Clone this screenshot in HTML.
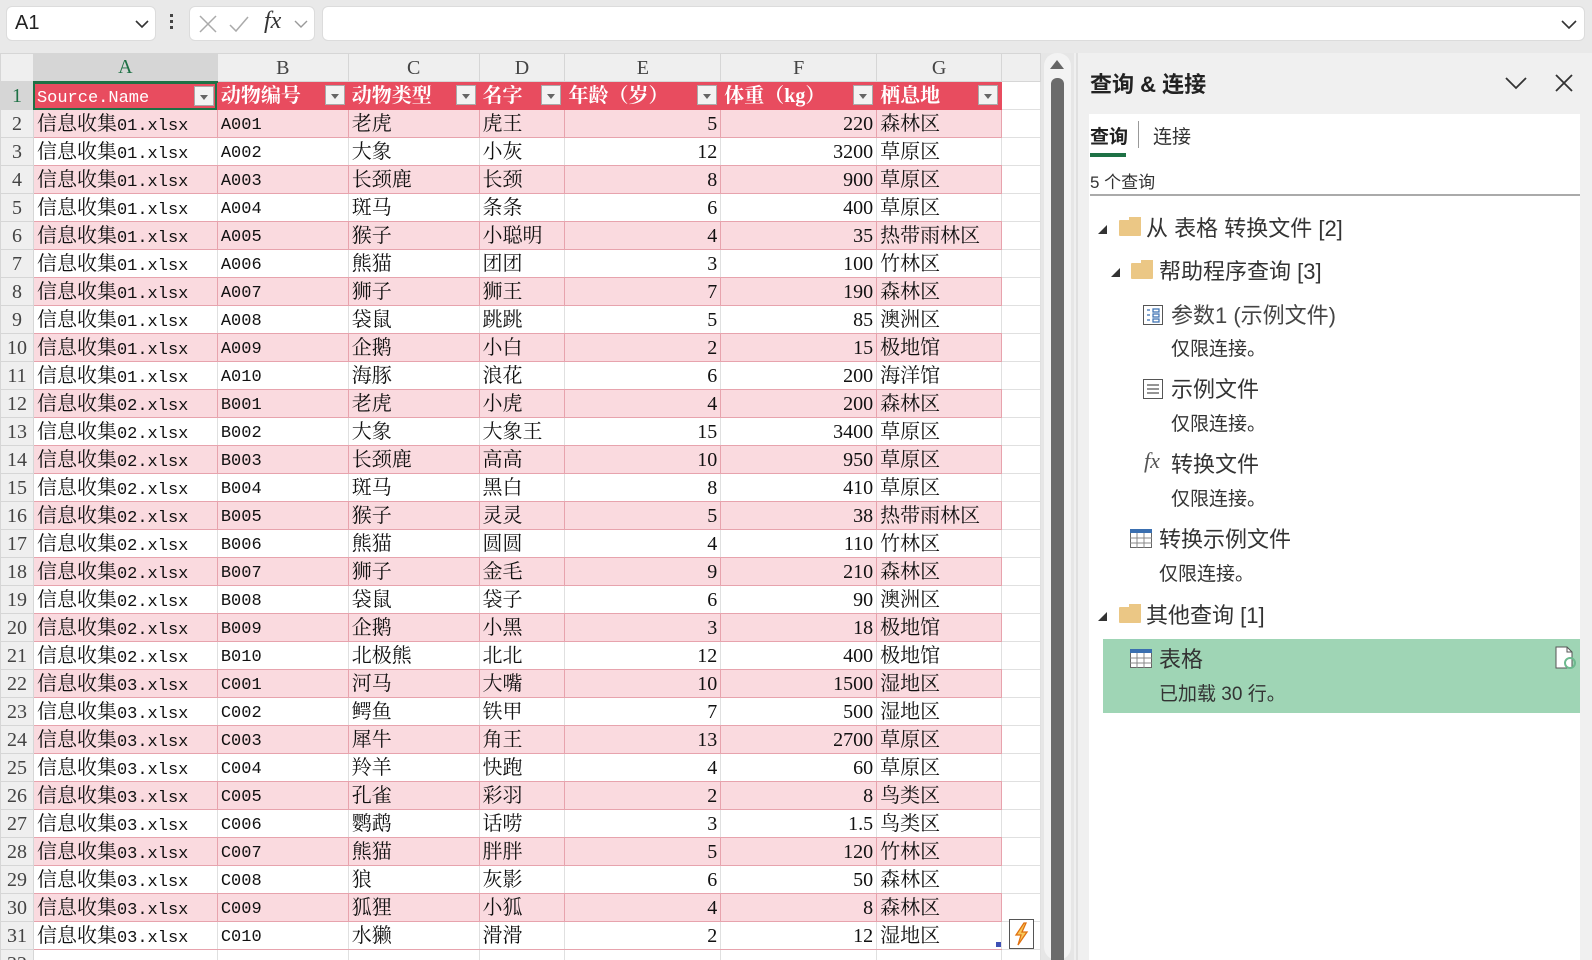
<!DOCTYPE html>
<html><head><meta charset="utf-8"><style>
*{box-sizing:border-box;margin:0;padding:0}
body{width:1592px;height:960px;overflow:hidden;background:#e9e9e9;font-family:"Liberation Sans","Noto Sans CJK SC",sans-serif;position:relative}
.abs{position:absolute}
.box{position:absolute;background:#fff;border:1px solid #dcdcdc;border-radius:6px}
#grid{position:absolute;left:0;top:53px;width:1041px;height:907px;background:#fff;overflow:hidden}
table{border-collapse:collapse;table-layout:fixed;font-family:"Liberation Serif","Noto Serif CJK SC",serif;font-size:20px;color:#111}
tr{height:28px}
td{height:28px;border:1px solid #e0e0e0;padding:0 3px;white-space:nowrap;overflow:hidden;line-height:26px;vertical-align:middle}
span.m{font-family:"Liberation Mono",monospace;font-size:17px;line-height:0}
td.m{font-family:"Liberation Mono",monospace;font-size:17px;line-height:20px;padding-top:5px}
td.h{background:#efefef;color:#444;text-align:center;border-color:#d6d6d6}
td.rn{background:#efefef;color:#444;text-align:center;border-color:#d6d6d6;padding:0}
tr.hd td.c{background:#e84c5f;color:#fff;position:relative;border-color:#e84c5f;font-weight:bold}
tr.p td.c{background:#fadadf;border-color:#e7a3ad}
tr.w td.c{background:#fff;border-bottom-color:#e7a3ad;border-top-color:#e7a3ad;border-left-color:#e0e0e0}
td.n{text-align:right}
.dd{position:absolute;right:3px;top:3px;width:20px;height:20px;background:#f3f3f3;border:1px solid #aaa}
.dd:after{content:"";position:absolute;left:5px;top:8px;border-left:4px solid transparent;border-right:4px solid transparent;border-top:5px solid #666}
#panel{position:absolute;left:1074px;top:53px;width:518px;height:907px;background:#f0f0f0}
#pw{position:absolute;left:1089px;top:114px;width:491px;height:846px;background:#fff}
.t{position:absolute;font-size:22px;color:#333;white-space:nowrap}
.s{position:absolute;font-size:19px;color:#333;white-space:nowrap}
.fold{position:absolute;width:22px;height:16px;background:#ebc785;border-radius:1px}
.fold:before{content:"";position:absolute;left:10px;top:-3px;width:12px;height:4px;background:#ebc785}
.tri{position:absolute;width:0;height:0;border-left:9px solid transparent;border-bottom:9px solid #333}
</style></head><body>
<div class="box" style="left:6px;top:6px;width:150px;height:35px"><span class="abs" style="left:8px;top:5px;font-size:20px;color:#222">A1</span><svg class="abs" style="left:128px;top:12px" width="14" height="10"><path d="M1 2l6 6 6-6" fill="none" stroke="#333" stroke-width="1.6"/></svg></div>
<div class="abs" style="left:170px;top:14px;width:3px;height:3px;background:#444;box-shadow:0 6px #444,0 12px #444"></div>
<div class="box" style="left:189px;top:6px;width:126px;height:35px">
<svg class="abs" style="left:8px;top:7px" width="20" height="20"><path d="M2 2l16 16M18 2L2 18" stroke="#aaa" stroke-width="1.5"/></svg>
<svg class="abs" style="left:38px;top:7px" width="22" height="20"><path d="M2 11l6 6L20 3" fill="none" stroke="#aaa" stroke-width="1.5"/></svg>
<span class="abs" style="left:74px;top:1px;font-family:'Liberation Serif',serif;font-style:italic;font-size:24px;color:#333">fx</span>
<svg class="abs" style="left:104px;top:12px" width="14" height="10"><path d="M1 2l6 6 6-6" fill="none" stroke="#999" stroke-width="1.4"/></svg></div>
<div class="box" style="left:322px;top:6px;width:1263px;height:35px"><svg class="abs" style="left:1238px;top:12px" width="16" height="10"><path d="M1 2l7 7 7-7" fill="none" stroke="#333" stroke-width="1.6"/></svg></div>
<div id="grid">
<table>
<colgroup><col style="width:33px"><col style="width:184px"><col style="width:131px"><col style="width:131px"><col style="width:86px"><col style="width:156px"><col style="width:156px"><col style="width:125px"><col style="width:39px"></colgroup>
<tr><td class="h"></td><td class="h" style="color:#1e7145;background:#d6d6d6;border-bottom:2px solid #1e7145">A</td><td class="h">B</td><td class="h">C</td><td class="h">D</td><td class="h">E</td><td class="h">F</td><td class="h">G</td><td class="h"></td></tr>
<tr class="hd"><td class="rn" style="color:#1e7145;background:#d6d6d6">1</td><td class="c" style="outline:2px solid #1e7145;outline-offset:-2px;font-weight:normal"><span class="m">Source.Name</span><span class="dd"></span></td><td class="c">动物编号<span class="dd"></span></td><td class="c">动物类型<span class="dd"></span></td><td class="c">名字<span class="dd"></span></td><td class="c">年龄（岁）<span class="dd"></span></td><td class="c">体重（kg）<span class="dd"></span></td><td class="c">栖息地<span class="dd"></span></td><td></td></tr>
<tr class="p"><td class="rn">2</td><td class="c">信息收集<span class="m">01.xlsx</span></td><td class="c m">A001</td><td class="c">老虎</td><td class="c">虎王</td><td class="c n">5</td><td class="c n">220</td><td class="c">森林区</td><td></td></tr>
<tr class="w"><td class="rn">3</td><td class="c">信息收集<span class="m">01.xlsx</span></td><td class="c m">A002</td><td class="c">大象</td><td class="c">小灰</td><td class="c n">12</td><td class="c n">3200</td><td class="c">草原区</td><td></td></tr>
<tr class="p"><td class="rn">4</td><td class="c">信息收集<span class="m">01.xlsx</span></td><td class="c m">A003</td><td class="c">长颈鹿</td><td class="c">长颈</td><td class="c n">8</td><td class="c n">900</td><td class="c">草原区</td><td></td></tr>
<tr class="w"><td class="rn">5</td><td class="c">信息收集<span class="m">01.xlsx</span></td><td class="c m">A004</td><td class="c">斑马</td><td class="c">条条</td><td class="c n">6</td><td class="c n">400</td><td class="c">草原区</td><td></td></tr>
<tr class="p"><td class="rn">6</td><td class="c">信息收集<span class="m">01.xlsx</span></td><td class="c m">A005</td><td class="c">猴子</td><td class="c">小聪明</td><td class="c n">4</td><td class="c n">35</td><td class="c">热带雨林区</td><td></td></tr>
<tr class="w"><td class="rn">7</td><td class="c">信息收集<span class="m">01.xlsx</span></td><td class="c m">A006</td><td class="c">熊猫</td><td class="c">团团</td><td class="c n">3</td><td class="c n">100</td><td class="c">竹林区</td><td></td></tr>
<tr class="p"><td class="rn">8</td><td class="c">信息收集<span class="m">01.xlsx</span></td><td class="c m">A007</td><td class="c">狮子</td><td class="c">狮王</td><td class="c n">7</td><td class="c n">190</td><td class="c">森林区</td><td></td></tr>
<tr class="w"><td class="rn">9</td><td class="c">信息收集<span class="m">01.xlsx</span></td><td class="c m">A008</td><td class="c">袋鼠</td><td class="c">跳跳</td><td class="c n">5</td><td class="c n">85</td><td class="c">澳洲区</td><td></td></tr>
<tr class="p"><td class="rn">10</td><td class="c">信息收集<span class="m">01.xlsx</span></td><td class="c m">A009</td><td class="c">企鹅</td><td class="c">小白</td><td class="c n">2</td><td class="c n">15</td><td class="c">极地馆</td><td></td></tr>
<tr class="w"><td class="rn">11</td><td class="c">信息收集<span class="m">01.xlsx</span></td><td class="c m">A010</td><td class="c">海豚</td><td class="c">浪花</td><td class="c n">6</td><td class="c n">200</td><td class="c">海洋馆</td><td></td></tr>
<tr class="p"><td class="rn">12</td><td class="c">信息收集<span class="m">02.xlsx</span></td><td class="c m">B001</td><td class="c">老虎</td><td class="c">小虎</td><td class="c n">4</td><td class="c n">200</td><td class="c">森林区</td><td></td></tr>
<tr class="w"><td class="rn">13</td><td class="c">信息收集<span class="m">02.xlsx</span></td><td class="c m">B002</td><td class="c">大象</td><td class="c">大象王</td><td class="c n">15</td><td class="c n">3400</td><td class="c">草原区</td><td></td></tr>
<tr class="p"><td class="rn">14</td><td class="c">信息收集<span class="m">02.xlsx</span></td><td class="c m">B003</td><td class="c">长颈鹿</td><td class="c">高高</td><td class="c n">10</td><td class="c n">950</td><td class="c">草原区</td><td></td></tr>
<tr class="w"><td class="rn">15</td><td class="c">信息收集<span class="m">02.xlsx</span></td><td class="c m">B004</td><td class="c">斑马</td><td class="c">黑白</td><td class="c n">8</td><td class="c n">410</td><td class="c">草原区</td><td></td></tr>
<tr class="p"><td class="rn">16</td><td class="c">信息收集<span class="m">02.xlsx</span></td><td class="c m">B005</td><td class="c">猴子</td><td class="c">灵灵</td><td class="c n">5</td><td class="c n">38</td><td class="c">热带雨林区</td><td></td></tr>
<tr class="w"><td class="rn">17</td><td class="c">信息收集<span class="m">02.xlsx</span></td><td class="c m">B006</td><td class="c">熊猫</td><td class="c">圆圆</td><td class="c n">4</td><td class="c n">110</td><td class="c">竹林区</td><td></td></tr>
<tr class="p"><td class="rn">18</td><td class="c">信息收集<span class="m">02.xlsx</span></td><td class="c m">B007</td><td class="c">狮子</td><td class="c">金毛</td><td class="c n">9</td><td class="c n">210</td><td class="c">森林区</td><td></td></tr>
<tr class="w"><td class="rn">19</td><td class="c">信息收集<span class="m">02.xlsx</span></td><td class="c m">B008</td><td class="c">袋鼠</td><td class="c">袋子</td><td class="c n">6</td><td class="c n">90</td><td class="c">澳洲区</td><td></td></tr>
<tr class="p"><td class="rn">20</td><td class="c">信息收集<span class="m">02.xlsx</span></td><td class="c m">B009</td><td class="c">企鹅</td><td class="c">小黑</td><td class="c n">3</td><td class="c n">18</td><td class="c">极地馆</td><td></td></tr>
<tr class="w"><td class="rn">21</td><td class="c">信息收集<span class="m">02.xlsx</span></td><td class="c m">B010</td><td class="c">北极熊</td><td class="c">北北</td><td class="c n">12</td><td class="c n">400</td><td class="c">极地馆</td><td></td></tr>
<tr class="p"><td class="rn">22</td><td class="c">信息收集<span class="m">03.xlsx</span></td><td class="c m">C001</td><td class="c">河马</td><td class="c">大嘴</td><td class="c n">10</td><td class="c n">1500</td><td class="c">湿地区</td><td></td></tr>
<tr class="w"><td class="rn">23</td><td class="c">信息收集<span class="m">03.xlsx</span></td><td class="c m">C002</td><td class="c">鳄鱼</td><td class="c">铁甲</td><td class="c n">7</td><td class="c n">500</td><td class="c">湿地区</td><td></td></tr>
<tr class="p"><td class="rn">24</td><td class="c">信息收集<span class="m">03.xlsx</span></td><td class="c m">C003</td><td class="c">犀牛</td><td class="c">角王</td><td class="c n">13</td><td class="c n">2700</td><td class="c">草原区</td><td></td></tr>
<tr class="w"><td class="rn">25</td><td class="c">信息收集<span class="m">03.xlsx</span></td><td class="c m">C004</td><td class="c">羚羊</td><td class="c">快跑</td><td class="c n">4</td><td class="c n">60</td><td class="c">草原区</td><td></td></tr>
<tr class="p"><td class="rn">26</td><td class="c">信息收集<span class="m">03.xlsx</span></td><td class="c m">C005</td><td class="c">孔雀</td><td class="c">彩羽</td><td class="c n">2</td><td class="c n">8</td><td class="c">鸟类区</td><td></td></tr>
<tr class="w"><td class="rn">27</td><td class="c">信息收集<span class="m">03.xlsx</span></td><td class="c m">C006</td><td class="c">鹦鹉</td><td class="c">话唠</td><td class="c n">3</td><td class="c n">1.5</td><td class="c">鸟类区</td><td></td></tr>
<tr class="p"><td class="rn">28</td><td class="c">信息收集<span class="m">03.xlsx</span></td><td class="c m">C007</td><td class="c">熊猫</td><td class="c">胖胖</td><td class="c n">5</td><td class="c n">120</td><td class="c">竹林区</td><td></td></tr>
<tr class="w"><td class="rn">29</td><td class="c">信息收集<span class="m">03.xlsx</span></td><td class="c m">C008</td><td class="c">狼</td><td class="c">灰影</td><td class="c n">6</td><td class="c n">50</td><td class="c">森林区</td><td></td></tr>
<tr class="p"><td class="rn">30</td><td class="c">信息收集<span class="m">03.xlsx</span></td><td class="c m">C009</td><td class="c">狐狸</td><td class="c">小狐</td><td class="c n">4</td><td class="c n">8</td><td class="c">森林区</td><td></td></tr>
<tr class="w"><td class="rn">31</td><td class="c">信息收集<span class="m">03.xlsx</span></td><td class="c m">C010</td><td class="c">水獭</td><td class="c">滑滑</td><td class="c n">2</td><td class="c n">12</td><td class="c">湿地区</td><td></td></tr>
<tr><td class="rn">32</td><td></td><td></td><td></td><td></td><td></td><td></td><td></td><td></td></tr>
</table>
<div class="abs" style="left:996px;top:889px;width:5px;height:5px;background:#3f51b5"></div>
<div class="abs" style="left:1009px;top:866px;width:25px;height:30px;border:1px solid #555;background:#fff"><svg width="23" height="28"><path d="M14 3L6 15h5l-3 10 9-13h-5l4-9z" fill="#f7c85a" stroke="#e07010" stroke-width="1.3"/></svg></div>
</div>
<div class="abs" style="left:1041px;top:53px;width:33px;height:907px;background:#e6e6e6"></div>
<div class="abs" style="left:1044px;top:53px;width:27px;height:907px;background:#f3f3f3;border-radius:13px"></div>
<div class="abs" style="left:1050px;top:60px;width:0;height:0;border-left:7px solid transparent;border-right:7px solid transparent;border-bottom:9px solid #666"></div>
<div class="abs" style="left:1051px;top:78px;width:13px;height:882px;background:#6b6b6b;border-radius:6px 6px 0 0"></div>
<div id="panel"></div>
<div class="abs" style="left:1076px;top:53px;width:2px;height:907px;background:#e0e0e0"></div>
<div class="t" style="left:1090px;top:67px;font-weight:bold;font-size:22px;color:#222">查询 &amp; 连接</div>
<svg class="abs" style="left:1505px;top:76px" width="22" height="14"><path d="M1 2l10 10 10-10" fill="none" stroke="#333" stroke-width="1.8"/></svg>
<svg class="abs" style="left:1555px;top:74px" width="18" height="18"><path d="M1 1l16 16M17 1L1 17" stroke="#333" stroke-width="1.8"/></svg>
<div id="pw"></div>
<div class="s" style="left:1090px;top:122px;font-weight:bold;color:#222">查询</div>
<div class="abs" style="left:1138px;top:121px;width:1px;height:27px;background:#999"></div>
<div class="s" style="left:1153px;top:122px;color:#333">连接</div>
<div class="abs" style="left:1090px;top:153px;width:36px;height:4px;background:#1e7145"></div>
<div class="s" style="left:1090px;top:168px;font-size:17px">5 个查询</div>
<div class="abs" style="left:1090px;top:194px;width:490px;height:2px;background:#aaa"></div>
<div class="tri" style="left:1098px;top:225px"></div>
<div class="fold" style="left:1119px;top:220px"></div>
<div class="t" style="left:1146px;top:211px">从 表格 转换文件 [2]</div>
<div class="tri" style="left:1111px;top:268px"></div>
<div class="fold" style="left:1131px;top:263px"></div>
<div class="t" style="left:1159px;top:254px">帮助程序查询 [3]</div>
<svg class="abs" style="left:1143px;top:305px" width="20" height="20"><rect x="0.5" y="0.5" width="19" height="19" fill="#fff" stroke="#555"/><path d="M4 5h3M4 10h3M4 15h3M10 4h6v3h-6zM10 9h6v3h-6zM10 14h6v3h-6z" fill="none" stroke="#3a6fb0" stroke-width="1.2"/></svg>
<div class="t" style="left:1171px;top:298px;color:#444">参数1 (示例文件)</div>
<div class="s" style="left:1171px;top:334px">仅限连接。</div>
<svg class="abs" style="left:1143px;top:379px" width="20" height="20"><rect x="0.5" y="0.5" width="19" height="19" fill="#fff" stroke="#555"/><path d="M4 6h12M4 10h12M4 14h12" stroke="#555" stroke-width="1.2"/></svg>
<div class="t" style="left:1171px;top:372px">示例文件</div>
<div class="s" style="left:1171px;top:409px">仅限连接。</div>
<div class="abs" style="left:1144px;top:448px;font-family:'Liberation Serif',serif;font-style:italic;font-size:22px;color:#555">fx</div>
<div class="t" style="left:1171px;top:447px">转换文件</div>
<div class="s" style="left:1171px;top:484px">仅限连接。</div>
<svg class="abs" style="left:1130px;top:529px" width="22" height="19"><rect x="0.5" y="0.5" width="21" height="18" fill="#fff" stroke="#666"/><rect x="0" y="0" width="22" height="4" fill="#3a6fb0"/><path d="M0 9h22M0 14h22M7 4v15M14 4v15" stroke="#888"/></svg>
<div class="t" style="left:1159px;top:522px">转换示例文件</div>
<div class="s" style="left:1159px;top:559px">仅限连接。</div>
<div class="tri" style="left:1098px;top:612px"></div>
<div class="fold" style="left:1119px;top:607px"></div>
<div class="t" style="left:1146px;top:598px">其他查询 [1]</div>
<div class="abs" style="left:1103px;top:639px;width:477px;height:74px;background:#9fd5b5"></div>
<svg class="abs" style="left:1130px;top:649px" width="22" height="19"><rect x="0.5" y="0.5" width="21" height="18" fill="#fff" stroke="#666"/><rect x="0" y="0" width="22" height="4" fill="#3a6fb0"/><path d="M0 9h22M0 14h22M7 4v15M14 4v15" stroke="#888"/></svg>
<div class="t" style="left:1159px;top:642px">表格</div>
<div class="s" style="left:1159px;top:679px">已加载 30 行。</div>
<svg class="abs" style="left:1555px;top:646px" width="22" height="24"><path d="M1 1h11l5 5v16H1z" fill="#fff" stroke="#555"/><path d="M12 1v5h5" fill="none" stroke="#555"/><circle cx="15" cy="17" r="5" fill="none" stroke="#6dba8f" stroke-width="2"/></svg>
</body></html>
